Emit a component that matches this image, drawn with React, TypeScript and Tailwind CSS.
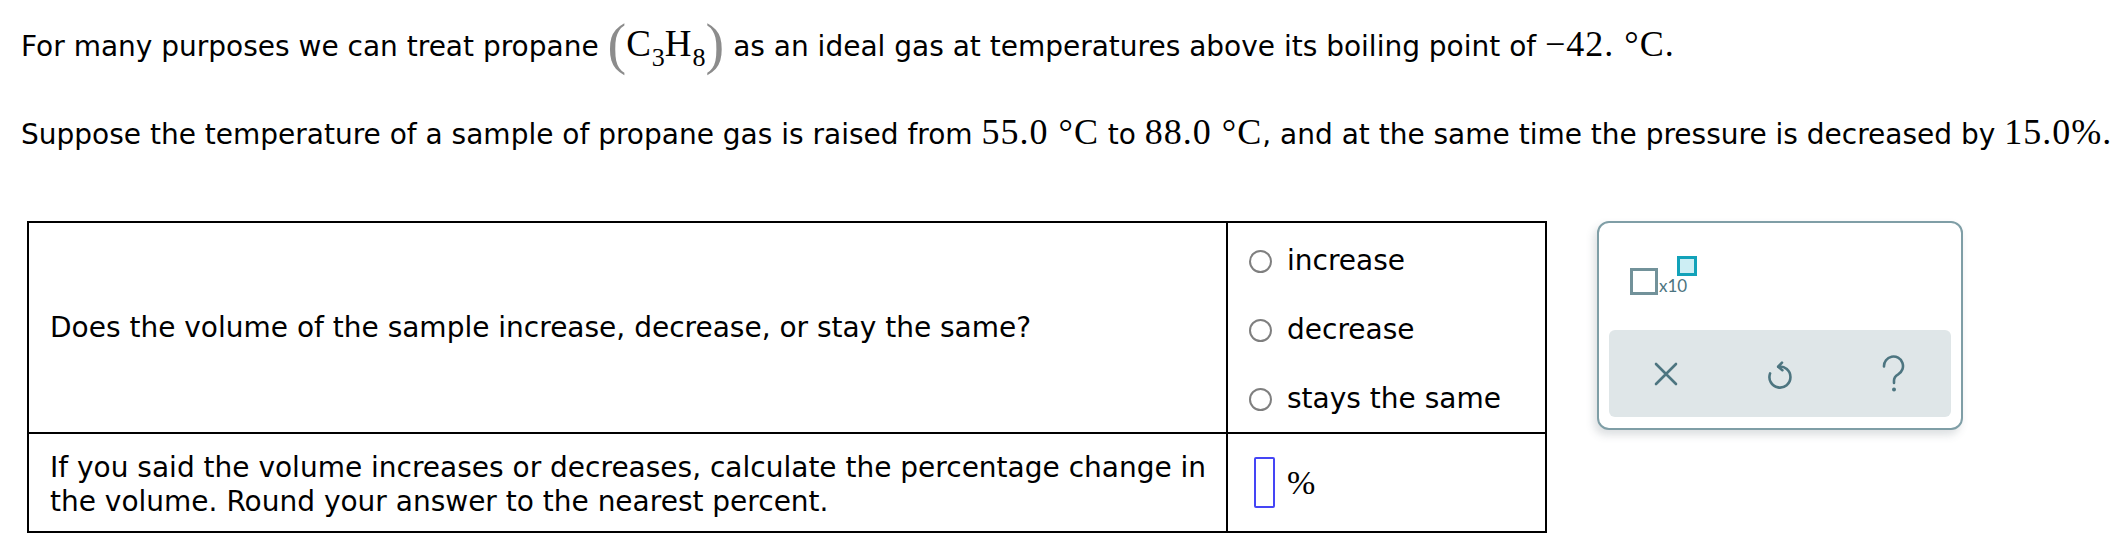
import React from 'react';

const SANS = "font-['DejaVu_Sans',sans-serif]";
const SERIF = "font-['Liberation_Serif',serif]";

function Num({ children }: { children: React.ReactNode }) {
  return <span className={`${SERIF} text-[36px] tracking-[1px]`}>{children}</span>;
}

function Radio({ label }: { label: string }) {
  return (
    <label className="flex items-center gap-[15px] h-[34px]">
      <span className="w-[23px] h-[23px] rounded-full border-2 border-[#7f7f7f] bg-white shrink-0" />
      <span>{label}</span>
    </label>
  );
}

function UndoIcon() {
  return (
    <svg width="26" height="32" viewBox="0 0 26 32" fill="none">
      <path d="M3.1 15.4A10.5 10.5 0 1 0 11.2 8.7" stroke="#4d7580" strokeWidth="2.6" strokeLinecap="round" />
      <path d="M15 4.6L11.2 8.7L15.4 12.2" stroke="#4d7580" strokeWidth="2.6" strokeLinecap="round" strokeLinejoin="round" />
    </svg>
  );
}

function HelpIcon() {
  return (
    <svg width="26" height="38" viewBox="0 0 26 38" fill="none">
      <path d="M3 11.5A9.5 9.5 0 1 1 17.2 19.3C14.3 21 13 22.6 13 25.5V28" stroke="#4d7580" strokeWidth="2.6" strokeLinecap="round" />
      <circle cx="13" cy="34.5" r="2" fill="#4d7580" />
    </svg>
  );
}

function CloseIcon() {
  return (
    <svg width="24" height="24" viewBox="0 0 24 24" fill="none">
      <path d="M2 2L22 22M22 2L2 22" stroke="#4d7580" strokeWidth="2.6" strokeLinecap="round" />
    </svg>
  );
}

export default function App() {
  return (
    <div className={`${SANS} text-[28px] leading-[34px] text-black bg-white w-[2120px] h-[556px] pl-[21px] pt-[27px]`}>
      <p className="whitespace-nowrap">
        For many purposes we can treat propane{' '}
        <span className={`${SERIF} text-[56px] leading-[34px] text-[#8c8c8c] align-[-7px]`}>(</span>
        <span className={`${SERIF} text-[37px] tracking-[1px]`}>C</span>
        <span className={`${SERIF} text-[26px] align-[-10px]`}>3</span>
        <span className={`${SERIF} text-[37px] tracking-[1px]`}>H</span>
        <span className={`${SERIF} text-[26px] align-[-10px]`}>8</span>
        <span className={`${SERIF} text-[56px] leading-[34px] text-[#8c8c8c] align-[-7px]`}>)</span>{' '}
        as an ideal gas at temperatures above its boiling point of <Num>−42. °C.</Num>
      </p>

      <p className="whitespace-nowrap mt-[40px]">
        Suppose the temperature of a sample of propane gas is raised from <Num>55.0 °C</Num> to{' '}
        <Num>88.0 °C</Num>, and at the same time the pressure is decreased by <Num>15.0%.</Num>
      </p>

      <div className="flex items-start mt-[69px] ml-[6px]">
        <table className="border-collapse border-2 border-black w-[1520px]">
          <tbody>
            <tr className="h-[210px]">
              <td className="border-2 border-black pl-[21px] align-middle">
                Does the volume of the sample increase, decrease, or stay the same?
              </td>
              <td className="border-2 border-black w-[319px] pl-[21px] align-top pt-[21px] pb-[16px]">
                <div className="flex flex-col gap-[35px]">
                  <Radio label="increase" />
                  <Radio label="decrease" />
                  <Radio label="stays the same" />
                </div>
              </td>
            </tr>
            <tr className="h-[99px]">
              <td className="border-2 border-black pl-[21px] pr-[16px] pt-[5px] align-middle leading-[34px]">
                If you said the volume increases or decreases, calculate the percentage change in the volume. Round
                your answer to the nearest percent.
              </td>
              <td className="border-2 border-black pl-[26px] align-middle">
                <div className="flex items-center gap-[12px]">
                  <span className="w-[21px] h-[51px] border-2 border-[#4545f5] rounded-[2px] bg-white" />
                  <span className={`${SERIF} text-[34px]`}>%</span>
                </div>
              </td>
            </tr>
          </tbody>
        </table>

        <div className="ml-[50px] w-[366px] h-[209px] rounded-[12px] border-2 border-[#7f9ea6] bg-white shadow-[-3px_5px_9px_rgba(60,80,90,0.18)] flex flex-col px-[10px] pb-[11px]">
          <div className="flex-1 relative">
            <div className="absolute left-[21px] top-[45px] w-[28px] h-[27px] border-[3px] border-[#72929a]" />
            <span className="absolute left-[50px] top-[54px] font-['Lato',sans-serif] text-[17px] leading-none text-[#4c7480]">
              x10
            </span>
            <div className="absolute left-[68px] top-[33px] w-[20px] h-[20px] border-[3px] border-[#12a2b9] bg-[#cdeef4]" />
          </div>
          <div className="h-[87px] rounded-[6px] bg-[#dfe6e8] grid grid-cols-3 items-center justify-items-center">
            <CloseIcon />
            <UndoIcon />
            <HelpIcon />
          </div>
        </div>
      </div>
    </div>
  );
}
